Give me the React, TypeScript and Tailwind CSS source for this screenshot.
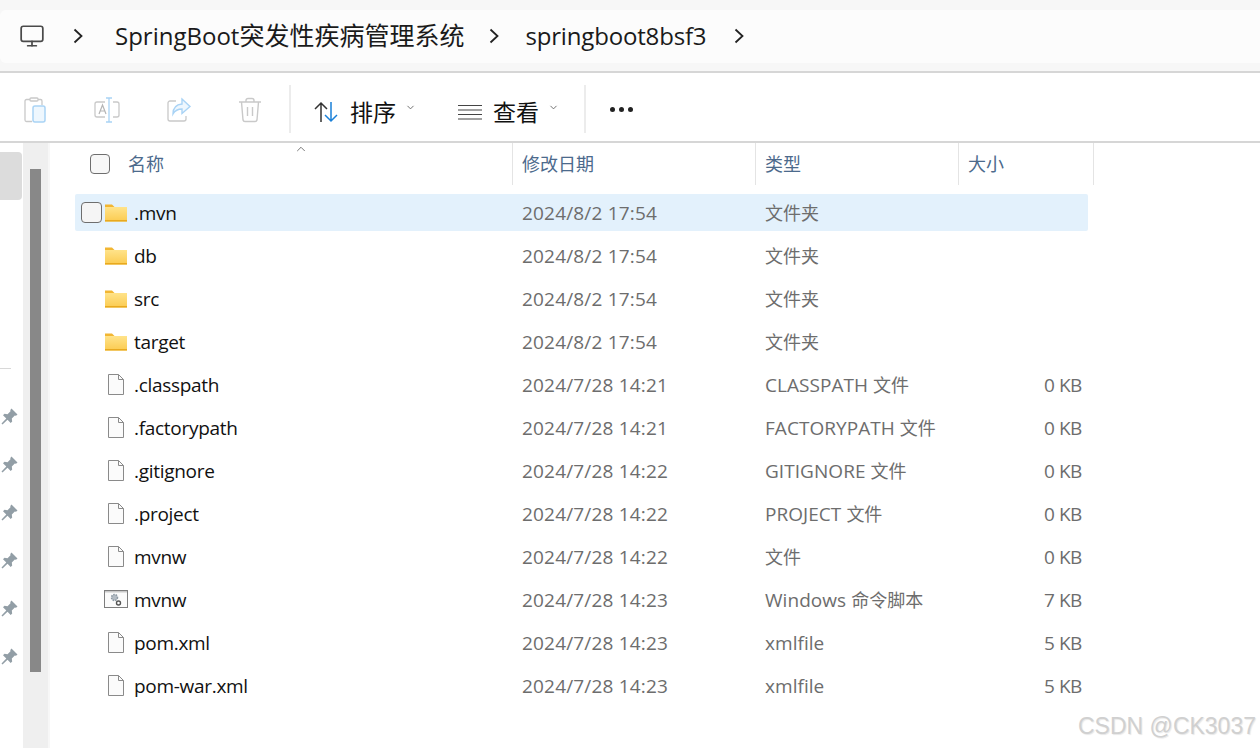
import React from 'react';
import { ChevronDown, ChevronUp, Monitor } from 'lucide-react';

const FILES = [
  { name: '.mvn', date: '2024/8/2 17:54', type: '文件夹', size: '', icon: 'folder', selected: true },
  { name: 'db', date: '2024/8/2 17:54', type: '文件夹', size: '', icon: 'folder' },
  { name: 'src', date: '2024/8/2 17:54', type: '文件夹', size: '', icon: 'folder' },
  { name: 'target', date: '2024/8/2 17:54', type: '文件夹', size: '', icon: 'folder' },
  { name: '.classpath', date: '2024/7/28 14:21', type: 'CLASSPATH 文件', size: '0 KB', icon: 'file' },
  { name: '.factorypath', date: '2024/7/28 14:21', type: 'FACTORYPATH 文件', size: '0 KB', icon: 'file' },
  { name: '.gitignore', date: '2024/7/28 14:22', type: 'GITIGNORE 文件', size: '0 KB', icon: 'file' },
  { name: '.project', date: '2024/7/28 14:22', type: 'PROJECT 文件', size: '0 KB', icon: 'file' },
  { name: 'mvnw', date: '2024/7/28 14:22', type: '文件', size: '0 KB', icon: 'file' },
  { name: 'mvnw', date: '2024/7/28 14:23', type: 'Windows 命令脚本', size: '7 KB', icon: 'script' },
  { name: 'pom.xml', date: '2024/7/28 14:23', type: 'xmlfile', size: '5 KB', icon: 'file' },
  { name: 'pom-war.xml', date: '2024/7/28 14:23', type: 'xmlfile', size: '5 KB', icon: 'file' },
];

function Crumb() {
  return (
    <svg width="10" height="16" viewBox="0 0 10 16" fill="none" stroke="#222" strokeWidth="1.800" className="shrink-0">
      <path d="M1.500 1.500L8.500 8l-7 6.500" />
    </svg>
  );
}

function FolderIcon() {
  return (
    <svg width="24" height="20" viewBox="0 0 24 20">
      <defs>
        <linearGradient id="folderFill" x1="0" y1="0" x2="0" y2="1">
          <stop offset="0" stopColor="#ffe38a" />
          <stop offset="1" stopColor="#fbcb50" />
        </linearGradient>
      </defs>
      <path d="M1 1.500h7l2.500 2.500H1z" fill="#f2b632" />
      <rect x="1" y="4" width="22" height="14.500" fill="url(#folderFill)" />
      <rect x="1" y="17" width="22" height="1.500" fill="#e8a91f" />
    </svg>
  );
}

function FileIcon() {
  return (
    <svg width="18" height="23" viewBox="0 0 18 23" fill="#fbfbfb" stroke="#8a8a8a">
      <path d="M1.500 1.500h10l5 5v15h-15z" />
      <path d="M11.500 1.500v5h5" fill="none" />
    </svg>
  );
}

function ScriptIcon() {
  return (
    <svg width="24" height="19" viewBox="0 0 24 19">
      <rect x="0.500" y="0.500" width="23" height="17" fill="#fbfbfb" stroke="#7d7d7d" />
      <rect x="1" y="1" width="22" height="1.500" fill="#c9c9c9" />
      <circle cx="10.500" cy="7.500" r="3" fill="#b4bcc4" stroke="#8d99a3" strokeWidth="1.500" strokeDasharray="1.500 1" />
      <circle cx="14.500" cy="13" r="2" fill="#fff" stroke="#555" strokeWidth="1.400" />
    </svg>
  );
}

function PinIcon() {
  return (
    <svg width="17" height="17" viewBox="0 0 17 17" fill="#929ea6">
      <path d="M10.500 0.500l6 6-1.500 1.200-1.200-.2-3 3 .4 3-1.500 1.500-3.200-3.300L1.500 16.500l-1-1 4.800-5-3.300-3.200 1.500-1.500 3 .4 3-3-.2-1.200z" />
    </svg>
  );
}

function ToolIcons() {
  return (
    <div className="flex items-center mt-[1px]">
      <div className="w-[72px] flex justify-center pr-[3px]">
        <svg width="26" height="26" viewBox="0 0 26 26" fill="none">
          <path d="M8 2.500H4.500A1.500 1.500 0 0 0 3 4v19a1.500 1.500 0 0 0 1.500 1.500H10M16 2.500h2.500A1.500 1.500 0 0 1 20 4v4" stroke="#c9c9c9" strokeWidth="1.300" />
          <rect x="8" y="1" width="8" height="3" rx="1" stroke="#c9c9c9" strokeWidth="1.300" />
          <rect x="11" y="9" width="12" height="16" rx="2" stroke="#a9d3f5" strokeWidth="1.500" fill="#eef7fe" />
        </svg>
      </div>
      <div className="w-[72px] flex justify-center pr-[2px]">
        <svg width="26" height="26" viewBox="0 0 26 26" fill="none">
          <path d="M11 5H3a2 2 0 0 0-2 2v11a2 2 0 0 0 2 2h8M19 5h4a2 2 0 0 1 2 2v11a2 2 0 0 1-2 2h-4" stroke="#c9c9c9" strokeWidth="1.300" />
          <path d="M12 1h6M15 1v24M12 25h6" stroke="#a9d3f5" strokeWidth="1.300" />
          <path d="M5 17l3.500-9 3.500 9M6.200 14h4.600" stroke="#b5b5b5" strokeWidth="1.200" />
        </svg>
      </div>
      <div className="w-[72px] flex justify-center pr-[2px]">
        <svg width="26" height="26" viewBox="0 0 26 26" fill="none">
          <path d="M10 4H4a2 2 0 0 0-2 2v16a2 2 0 0 0 2 2h14a2 2 0 0 0 2-2v-3" stroke="#c9c9c9" strokeWidth="1.300" />
          <path d="M16 2l8 7.500-8 7v-4.500c-4 0-7 1.500-9 5 0-6 3.500-9.500 9-10z" stroke="#a9d3f5" strokeWidth="1.400" fill="#eef7fe" />
        </svg>
      </div>
      <div className="w-[72px] flex justify-center pr-[4px]">
        <svg width="24" height="26" viewBox="0 0 24 26" fill="none" stroke="#c9c9c9" strokeWidth="1.400">
          <path d="M1 5h22M8 5V3.500A2 2 0 0 1 10 1.500h4a2 2 0 0 1 2 2V5M3.500 5l1.500 18a2 2 0 0 0 2 1.500h10a2 2 0 0 0 2-1.500L20.500 5M9.500 10v9M14.500 10v9" />
        </svg>
      </div>
    </div>
  );
}

function TypeText({ text }: { text: string }) {
  const m = text.match(/^([^\u4e00-\u9fff]*)(.*)$/);
  return (
    <>
      <span className="tracking-[0.05px]">{m?.[1]}</span>
      <span className="text-[18px] tracking-normal">{m?.[2]}</span>
    </>
  );
}

export default function App() {
  return (
    <div className="w-[1260px] h-[748px] overflow-hidden relative bg-white text-[#1a1a1a] font-['Open_Sans','Noto_Sans_CJK_SC',sans-serif]">
      {/* address bar */}
      <div className="h-[73px] bg-[#f7f7f7] pt-[10px] border-b-2 border-[#d6d6d6]">
        <div className="h-[53px] bg-[#fcfcfc] rounded-l-md flex items-center pl-[19px] text-[24px]">
          <Monitor size={26} strokeWidth={1.600} className="text-[#4a4a4a] -mt-[2px]" />
          <span className="ml-[28px] -mt-[2px]"><Crumb /></span>
          <span className="ml-[32px] -mt-[2px]">SpringBoot<span className="text-[25px]">突发性疾病管理系统</span></span>
          <span className="ml-[25px] -mt-[2px]"><Crumb /></span>
          <span className="ml-[26px] -mt-[2px] tracking-[-0.17px]">springboot8bsf3</span>
          <span className="ml-[28px] -mt-[2px]"><Crumb /></span>
        </div>
      </div>

      {/* toolbar */}
      <div className="h-[70px] flex items-center border-b-2 border-[#d6d6d6] pt-[4px]">
        <ToolIcons />
        <div className="ml-[1px] w-[2px] h-[48px] bg-[#ececec]" />
        <div className="ml-[23px] flex items-center mt-[6px]">
          <svg width="24" height="22" viewBox="0 0 24 22" fill="none" strokeWidth="1.500">
            <path d="M7 21V2M1 8l6-6 6 6" stroke="#333" />
            <path d="M17 1v19M11 14l6 6 6-6" stroke="#1a80d8" />
          </svg>
          <span className="ml-[12px] text-[23px] text-[#111]">排序</span>
          <ChevronDown size={11} className="ml-[9px] -mt-[10px] text-[#666]" />
        </div>
        <div className="ml-[41px] flex items-center mt-[6px]">
          <svg width="26" height="16" viewBox="0 0 26 16" stroke="#444" strokeWidth="1.200">
            <path d="M1 1.500h24M1 6h24M1 10.500h24M1 15h24" />
          </svg>
          <span className="ml-[10px] text-[23px] text-[#111]">查看</span>
          <ChevronDown size={11} className="ml-[9px] -mt-[10px] text-[#666]" />
        </div>
        <div className="ml-[25px] w-[2px] h-[48px] bg-[#ececec]" />
        <div className="ml-[24px] flex gap-[4px] mt-[1px]">
          <span className="w-[5px] h-[5px] rounded-full bg-[#222]" />
          <span className="w-[5px] h-[5px] rounded-full bg-[#222]" />
          <span className="w-[5px] h-[5px] rounded-full bg-[#222]" />
        </div>
      </div>

      <div className="flex h-[605px]">
        {/* nav pane sliver */}
        <div className="w-[23px] pt-[9px] shrink-0">
          <div className="h-[48px] bg-[#dcdcdc] rounded-r-sm w-[22px]" />
          <div className="mt-[168px] h-px w-[11px] bg-[#d8d8d8]" />
          <div className="mt-[39px] flex flex-col gap-[31px] pl-[1px]">
            {[0, 1, 2, 3, 4, 5].map((i) => (
              <PinIcon key={i} />
            ))}
          </div>
        </div>
        {/* scrollbar */}
        <div className="w-[25px] bg-[#efefef] shrink-0 pt-[26px] pl-[7px]">
          <div className="w-[11px] h-[503px] bg-[#888888]" />
        </div>
        <div className="w-[2px] bg-[#f7f7f7] shrink-0" />

        {/* file list */}
        <div className="flex-1 relative pl-[25px] text-[19px]">
          <ChevronUp size={14} strokeWidth={1.500} className="absolute left-[244px] -top-[1px] text-[#666]" />
          <div className="h-[42px] flex text-[#4c6a8c] text-[18px]">
            <div className="w-[438px] flex items-center pl-[15px] border-r border-[#e4e4e4]">
              <span className="w-[20px] h-[20px] rounded-[4px] border border-[#6e6e6e] bg-[#f7f7f7]" />
              <span className="ml-[18px]">名称</span>
            </div>
            <div className="w-[243px] flex items-center pl-[9px] border-r border-[#e4e4e4]">修改日期</div>
            <div className="w-[203px] flex items-center pl-[9px] border-r border-[#e4e4e4]">类型</div>
            <div className="w-[135px] flex items-center pl-[9px] border-r border-[#e4e4e4]">大小</div>
          </div>
          <div className="mt-[9px] w-[1013px]">
            {FILES.map((f, i) => (
              <div key={i} className={`h-[37px] mb-[6px] flex items-center rounded-[2px] ${f.selected ? 'bg-[#e3f1fc]' : ''}`}>
                <div className="w-[438px] flex items-center relative pl-[59px]">
                  {f.selected && (
                    <span className="absolute left-[6px] w-[21px] h-[21px] rounded-[4px] border border-[#6e6e6e] bg-[#f5f5f5]" />
                  )}
                  <span className="absolute left-[28px] w-[26px] flex justify-center">
                    {f.icon === 'folder' && <FolderIcon />}
                    {f.icon === 'file' && <FileIcon />}
                    {f.icon === 'script' && <ScriptIcon />}
                  </span>
                  <span className="text-[#111] pt-[2px] tracking-[-0.3px]">{f.name}</span>
                </div>
                <div className="w-[243px] pl-[9px] pt-[2px] text-[#6d6d6d] tracking-[0.18px]">{f.date}</div>
                <div className="w-[203px] pl-[9px] pt-[2px] text-[#6d6d6d]"><TypeText text={f.type} /></div>
                <div className="w-[123px] pt-[2px] text-right text-[#6d6d6d] tracking-[-0.4px]">{f.size}</div>
              </div>
            ))}
          </div>
        </div>
      </div>

      <span className="absolute right-[4px] top-[713px] text-[23px] leading-[26px] text-[#d0d0d0] font-['Liberation_Sans',sans-serif] [text-shadow:1px_1px_1px_#e8e8e8]">
        CSDN @CK3037
      </span>
    </div>
  );
}
